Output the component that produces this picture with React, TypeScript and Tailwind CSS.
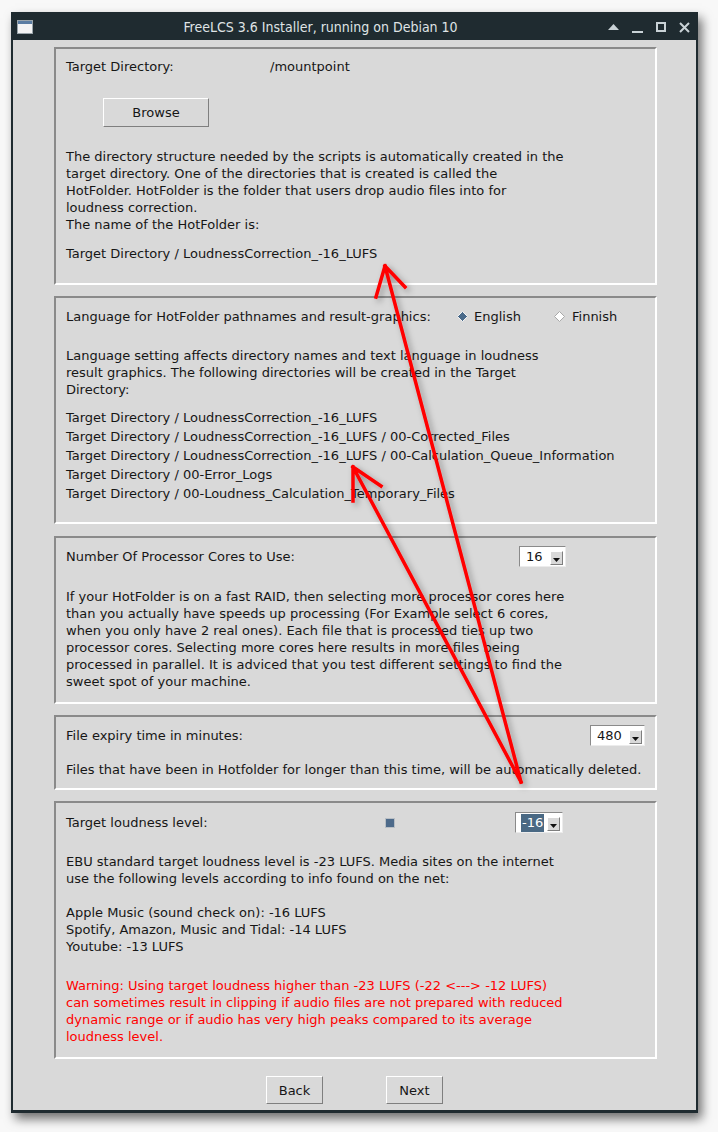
import React from 'react';

const FONT = "font-['DejaVu_Sans',sans-serif] text-[13px] leading-[17px] text-[#161616]";
const PANEL =
  'ml-[41px] w-[603px] border-2 border-t-[#8a8a8a] border-l-[#8a8a8a] border-b-white border-r-white pl-[10px] flex flex-col';
const RAISED = 'border border-t-white border-l-white border-b-[#7f7f7f] border-r-[#7f7f7f]';

function Lines({ lines, className = '' }: { lines: string[]; className?: string }) {
  return (
    <div className={className}>
      {lines.map((l) => (
        <div key={l} className="whitespace-pre">
          {l}
        </div>
      ))}
    </div>
  );
}

function Combo({ value, width, selected }: { value: string; width: string; selected?: boolean }) {
  return (
    <div
      className={`${width} h-[21px] bg-white border border-t-[#8a8a8a] border-l-[#8a8a8a] border-b-[#ececec] border-r-[#ececec] flex items-center pl-[5px] pr-[2px]`}
    >
      <span className={selected ? 'bg-[#4a6984] text-white px-[1px] leading-[18px]' : 'px-[1px]'}>{value}</span>
      <div className={`ml-auto self-end mb-[1px] w-[13px] h-[14px] bg-[#d9d9d9] ${RAISED} flex items-end justify-center pb-[2px]`}>
        <svg width="7" height="4" viewBox="0 0 7 4">
          <polygon points="0,0 7,0 3.5,4" fill="#111" />
        </svg>
      </div>
    </div>
  );
}

function Diamond({ on }: { on?: boolean }) {
  return (
    <svg width="11" height="11" viewBox="0 0 11 11">
      <polygon
        points="5.5,0.5 10.5,5.5 5.5,10.5 0.5,5.5"
        fill={on ? '#4a6a8a' : '#ffffff'}
        stroke={on ? '#f4f4f4' : '#a9a9a9'}
        strokeWidth="1"
      />
    </svg>
  );
}

function TitleBar() {
  return (
    <div className="h-[26px] bg-[#1f2b30] flex items-center shrink-0">
      <svg className="ml-[4px]" width="16" height="14" viewBox="0 0 16 14">
        <rect x="0.5" y="0.5" width="15" height="13" fill="#f4f4f4" stroke="#9aa4aa" />
        <rect x="1" y="1" width="14" height="3" fill="#5b7da3" />
      </svg>
      <div className="flex-1 flex justify-center pl-[2px] font-['DejaVu_Sans_Condensed','DejaVu_Sans',sans-serif] text-[14px] text-[#dfe3e5]">
        FreeLCS 3.6 Installer, running on Debian 10
      </div>
      <div className="w-[90px] flex items-center gap-[13px] pl-[2px]">
        <svg width="11" height="6" viewBox="0 0 11 6">
          <polygon points="0,6 11,6 5.5,0" fill="#c9d2d6" />
        </svg>
        <svg width="11" height="14" viewBox="0 0 11 14">
          <rect x="0" y="11" width="11" height="2" fill="#c9d2d6" />
        </svg>
        <svg width="10" height="10" viewBox="0 0 10 10">
          <rect x="1" y="1" width="8" height="8" fill="none" stroke="#c9d2d6" strokeWidth="2" />
        </svg>
        <svg width="11" height="11" viewBox="0 0 11 11">
          <path d="M1 1 L10 10 M10 1 L1 10" stroke="#c9d2d6" strokeWidth="2" />
        </svg>
      </div>
    </div>
  );
}

function Arrows() {
  return (
    <svg className="absolute inset-0 pointer-events-none" width="718" height="1132" viewBox="0 0 718 1132">
      <defs>
        <filter id="sh" x="-20%" y="-20%" width="140%" height="140%">
          <feDropShadow dx="3" dy="3" stdDeviation="3" floodColor="#000" floodOpacity="0.35" />
        </filter>
      </defs>
      <g filter="url(#sh)" stroke="#ff0000" strokeWidth="3.5" fill="none" strokeLinecap="square">
        <path d="M521 782 L385 266 M385 266 L376 297 M385 266 L405 287" />
        <path d="M521 782 L353 467 M353 467 L353 501 M353 467 L381 486" />
      </g>
    </svg>
  );
}

export default function App() {
  return (
    <div className={`relative w-[718px] h-[1132px] bg-[#f8f8f8] pt-[12px] pl-[11px] ${FONT}`}>
      <div className="w-[687px] h-[1101px] border-2 border-b-[3px] border-[#1f2b30] bg-[#d9d9d9] flex flex-col shadow-[4px_6px_10px_rgba(0,0,0,0.55)]">
        <TitleBar />
        <div className="flex flex-col pt-[7px]">
          <div className={`${PANEL} h-[238px]`}>
            <div className="mt-[9px] flex">
              <span className="w-[204px]">Target Directory:</span>
              <span>/mountpoint</span>
            </div>
            <button className={`mt-[23px] ml-[37px] w-[106px] h-[29px] ${RAISED} flex items-center justify-center`}>
              Browse
            </button>
            <Lines
              className="mt-[21px]"
              lines={[
                'The directory structure needed by the scripts is automatically created in the',
                'target directory. One of the directories that is created is called the',
                'HotFolder. HotFolder is the folder that users drop audio files into for',
                'loudness correction.',
                'The name of the HotFolder is:',
              ]}
            />
            <div className="mt-[12px]">Target Directory / LoudnessCorrection_-16_LUFS</div>
          </div>

          <div className={`${PANEL} h-[228px] mt-[11px]`}>
            <div className="mt-[8px] h-[21px] flex items-center">
              <span className="w-[391px]">Language for HotFolder pathnames and result-graphics:</span>
              <Diamond on />
              <span className="ml-[6px] w-[80px]">English</span>
              <Diamond />
              <span className="ml-[7px]">Finnish</span>
            </div>
            <Lines
              className="mt-[20px]"
              lines={[
                'Language setting affects directory names and text language in loudness',
                'result graphics. The following directories will be created in the Target',
                'Directory:',
              ]}
            />
            <Lines
              className="mt-[10px] leading-[19px]"
              lines={[
                'Target Directory / LoudnessCorrection_-16_LUFS',
                'Target Directory / LoudnessCorrection_-16_LUFS / 00-Corrected_Files',
                'Target Directory / LoudnessCorrection_-16_LUFS / 00-Calculation_Queue_Information',
                'Target Directory / 00-Error_Logs',
                'Target Directory / 00-Loudness_Calculation_Temporary_Files',
              ]}
            />
          </div>

          <div className={`${PANEL} h-[168px] mt-[12px]`}>
            <div className="mt-[8px] h-[21px] flex items-center">
              <span className="w-[453px]">Number Of Processor Cores to Use:</span>
              <Combo value="16" width="w-[47px]" />
            </div>
            <Lines
              className="mt-[21px]"
              lines={[
                'If your HotFolder is on a fast RAID, then selecting more processor cores here',
                'than you actually have speeds up processing (For Example select 6 cores,',
                'when you only have 2 real ones). Each file that is processed ties up two',
                'processor cores. Selecting more cores here results in more files being',
                'processed in parallel. It is adviced that you test different settings to find the',
                'sweet spot of your machine.',
              ]}
            />
          </div>

          <div className={`${PANEL} h-[75px] mt-[11px]`}>
            <div className="mt-[8px] h-[21px] flex items-center">
              <span className="w-[524px]">File expiry time in minutes:</span>
              <Combo value="480" width="w-[55px]" />
            </div>
            <div className="mt-[15px] whitespace-pre">
              Files that have been in Hotfolder for longer than this time, will be automatically deleted.
            </div>
          </div>

          <div className={`${PANEL} h-[258px] mt-[11px]`}>
            <div className="mt-[9px] h-[21px] flex items-center">
              <span className="w-[319px]">Target loudness level:</span>
              <div className="w-[10px] h-[10px] bg-[#4d6a8a] border border-[#b8bec4]" />
              <div className="ml-[120px]">
                <Combo value="-16" width="w-[48px]" selected />
              </div>
            </div>
            <Lines
              className="mt-[20px]"
              lines={[
                'EBU standard target loudness level is -23 LUFS. Media sites on the internet',
                'use the following levels according to info found on the net:',
              ]}
            />
            <Lines
              className="mt-[17px]"
              lines={[
                'Apple Music (sound check on): -16 LUFS',
                'Spotify, Amazon, Music and Tidal: -14 LUFS',
                'Youtube: -13 LUFS',
              ]}
            />
            <Lines
              className="mt-[22px] text-[#ff0000]"
              lines={[
                'Warning: Using target loudness higher than -23 LUFS (-22 <---> -12 LUFS)',
                'can sometimes result in clipping if audio files are not prepared with reduced',
                'dynamic range or if audio has very high peaks compared to its average',
                'loudness level.',
              ]}
            />
          </div>

          <div className="mt-[17px] flex">
            <button className={`ml-[253px] w-[57px] h-[28px] ${RAISED} flex items-center justify-center`}>Back</button>
            <button className={`ml-[63px] w-[57px] h-[28px] ${RAISED} flex items-center justify-center`}>Next</button>
          </div>
        </div>
      </div>
      <Arrows />
    </div>
  );
}
